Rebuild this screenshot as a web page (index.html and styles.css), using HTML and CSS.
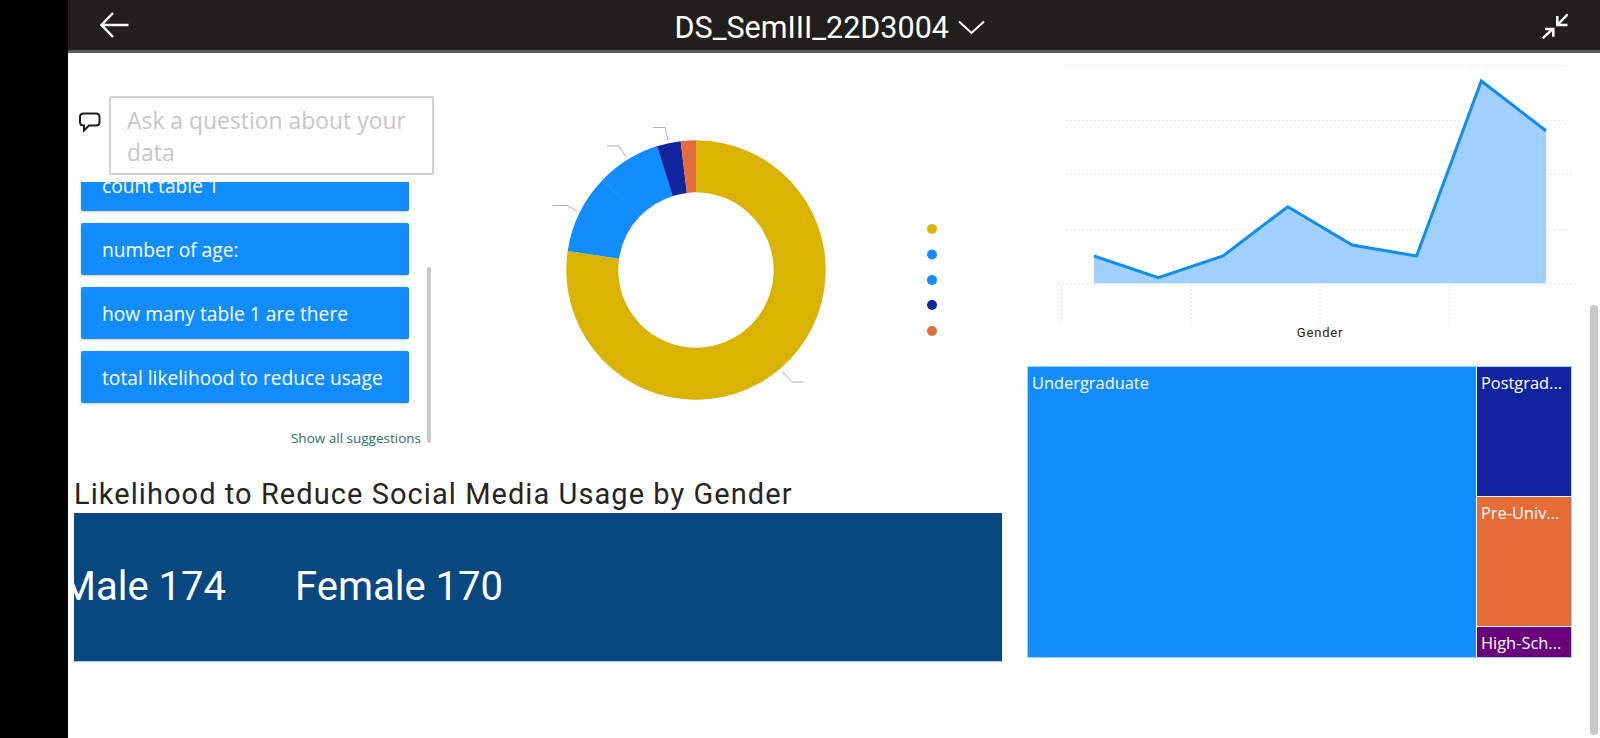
FILE: index.html
```html
<!DOCTYPE html>
<html>
<head>
    <meta charset="utf-8">
    <title>DS_SemIII_22D3004</title>
    <link rel="stylesheet" href="styles.css">
</head>
<body>
<div class="rail"></div>
<div class="app">
    <div class="topbar">
        <svg class="back" width="32" height="28" viewBox="0 0 32 28"><path d="M29.500 14H3M14 2 2.500 14 14 26" fill="none" stroke="#fff" stroke-width="2.500"/></svg>
        <div class="report-title">
            <span>DS_SemIII_22D3004</span>
            <svg width="27" height="15" viewBox="0 0 27 15"><path d="M1 1.500 13.500 13 26 1.500" fill="none" stroke="#fff" stroke-width="2"/></svg>
        </div>
        <svg class="collapse" width="28" height="28" viewBox="0 0 28 28">
            <path d="M27.700 3.300 17.300 14M17.300 5V14H27.500M2.700 27.300 13.300 17.300M5 18H13.300V25.700" fill="none" stroke="#fff" stroke-width="2.500"/>
        </svg>
    </div>

    <!-- report canvas, visuals sit where the report author dropped them -->
    <div class="canvas">
        <div class="qna">
            <svg class="chat" width="24" height="22" viewBox="0 0 24 22"><path d="M5.500 2.500H18Q21.500 2.500 21.500 6V11Q21.500 14.500 18 14.500H11L6 19.500V14.500H5.500Q2 14.500 2 11V6Q2 2.500 5.500 2.500Z" fill="#fff" stroke="#201f1e" stroke-width="2"/></svg>
            <div class="qna-input">Ask a question about your data</div>
            <div class="suggestions">
                <div class="suggestion first">count table 1</div>
                <div class="suggestion">number of age:</div>
                <div class="suggestion">how many table 1 are there</div>
                <div class="suggestion">total likelihood to reduce usage</div>
            </div>
            <div class="show-all">Show all suggestions</div>
            <div class="qna-scroll"></div>
        </div>

        <svg class="donut" width="420" height="300" viewBox="540 110 420 300">
            <path d="M696 140.300A129.700 129.700 0 1 1 567.700 251L619.100 258.700A77.700 77.700 0 1 0 696 192.300Z" fill="#d9b300"/>
            <path d="M567.700 251A129.700 129.700 0 0 1 602.700 180L640.100 216A77.700 77.700 0 0 0 619.100 258.700Z" fill="#118dff"/>
            <path d="M602.700 180A129.700 129.700 0 0 1 657 146.300L672.700 195.900A77.700 77.700 0 0 0 640.100 216Z" fill="#118dff" stroke="#118dff" stroke-width="0.400"/>
            <path d="M657 146.300A129.700 129.700 0 0 1 680.700 141.200L686.800 192.900A77.700 77.700 0 0 0 672.700 195.900Z" fill="#12239e"/>
            <path d="M680.700 141.200A129.700 129.700 0 0 1 696 140.300V192.300A77.700 77.700 0 0 0 686.800 192.900Z" fill="#e66c37"/>
            <g fill="none" stroke="#b3b0ad">
                <path d="M553 205.500H567L577.500 211.500"/>
                <path d="M607 146H618.500L626.500 157.500"/>
                <path d="M653 127.500H665L668 140.500"/>
                <path d="M783 372 792 382H803.500"/>
            </g>
            <circle cx="932" cy="229" r="5" fill="#d9b300"/>
            <circle cx="932" cy="254.500" r="5" fill="#118dff"/>
            <circle cx="932" cy="280" r="5" fill="#118dff"/>
            <circle cx="932" cy="305" r="5" fill="#12239e"/>
            <circle cx="932" cy="331" r="5" fill="#e66c37"/>
        </svg>

        <div class="card-title">Likelihood to Reduce Social Media Usage by Gender</div>
        <div class="banner">
            <div class="ticker">
                <span>Male 174</span>
                <span>Female 170</span>
            </div>
        </div>

        <svg class="area" width="540" height="300" viewBox="1050 55 540 300">
            <g fill="none" stroke="#dcdcdc" stroke-dasharray="1.500 2.500">
                <path d="M1066 65.700H1567M1066 120.700H1567M1066 174.300H1572M1066 229.300H1567M1058 283.700H1575"/>
                <path d="M1061.500 285V323M1191 285V323M1320 285V323M1449 285V323"/>
            </g>
            <path d="M1094 256 1158.400 277.700 1223 256 1287.800 206.700 1352.200 245 1416.600 256 1481.300 81 1546 130.700V283.300H1094Z" fill="#9fd0ff"/>
            <path d="M1094 256 1158.400 277.700 1223 256 1287.800 206.700 1352.200 245 1416.600 256 1481.300 81 1546 130.700" fill="none" stroke="#118dea" stroke-width="3"/>
            <text x="1320" y="337" text-anchor="middle" class="axis-label">Gender</text>
        </svg>

        <div class="treemap">
            <div class="tile tile-ug">Undergraduate</div>
            <div class="tile-col">
                <div class="tile tile-pg">Postgrad...</div>
                <div class="tile tile-pu">Pre-Univ...</div>
                <div class="tile tile-hs">High-Sch...</div>
            </div>
        </div>
    </div>
    <div class="page-scroll"></div>
</div>
</body>
</html>
```

FILE: styles.css
```css
html, body {
    margin: 0;
    height: 100%;
    overflow: hidden;
}
body {
    display: flex;
    font-family: "Open Sans", "Noto Sans", sans-serif;
    background: #000000;
}
.rail {
    width: 68px;
    flex: none;
    background: #000000;
}
.app {
    position: relative;
    flex: 1;
    display: flex;
    flex-direction: column;
    background: #ffffff;
}

/* top bar */
.topbar {
    position: relative;
    height: 50px;
    flex: none;
    display: flex;
    align-items: center;
    background: #201f1e;
    border-bottom: 3px solid #5c5b5a;
    box-sizing: content-box;
}
.back {
    margin-left: 31px;
}
.report-title {
    position: absolute;
    left: 606.500px;
    top: 0;
    height: 50px;
    padding-top: 4px;
    box-sizing: border-box;
    display: flex;
    align-items: center;
    gap: 9px;
    color: #ffffff;
    font-family: "Roboto", sans-serif;
    font-size: 30.500px;
}
.collapse {
    margin-left: auto;
    margin-right: 32px;
}

/* canvas */
.canvas {
    position: relative;
    flex: 1;
    margin-top: -1px;
}
.canvas > * {
    position: absolute;
}

/* q&a */
.qna {
    left: 0;
    top: 0;
    width: 440px;
    height: 400px;
}
.qna > * {
    position: absolute;
}
.chat {
    left: 10px;
    top: 59px;
}
.qna-input {
    left: 41px;
    top: 44px;
    width: 325px;
    height: 79px;
    box-sizing: border-box;
    padding: 7px 0 7px 16px;
    border: 2px solid #d0d0d0;
    border-radius: 2px;
    background: #ffffff;
    color: #c8c6c4;
    font-size: 22.900px;
    line-height: 32px;
    z-index: 2;
}
.suggestions {
    left: 10px;
    top: 130px;
    width: 328px;
    height: 224px;
    padding: 0 3px 3px;
    display: flex;
    flex-direction: column;
    gap: 12px;
    overflow: hidden;
}
.suggestion {
    flex: none;
    height: 52px;
    box-sizing: border-box;
    padding: 1px 0 0 21px;
    display: flex;
    align-items: center;
    border-radius: 2px;
    background: #118dff;
    box-shadow: 0 1px 3px rgba(0, 0, 0, 0.22);
    color: #ffffff;
    font-size: 19.200px;
}
.suggestion.first {
    margin-top: -23px;
}
.show-all {
    right: 87px;
    top: 377px;
    color: #2f6f65;
    font-size: 13.500px;
}
.qna-scroll {
    left: 359px;
    top: 215px;
    width: 4px;
    height: 176px;
    border-radius: 2px;
    background: #c8c8c8;
}

/* donut */
.donut {
    left: 472px;
    top: 58px;
}

/* banner */
.card-title {
    left: 6px;
    top: 425px;
    color: #252423;
    font-family: "Roboto", sans-serif;
    font-size: 29px;
    letter-spacing: 1.060px;
    white-space: nowrap;
}
.banner {
    left: 5.500px;
    top: 461px;
    width: 928.500px;
    height: 149px;
    display: flex;
    align-items: center;
    overflow: hidden;
    background: #094780;
    border-bottom: 1px solid #9fc5e8;
    box-sizing: border-box;
}
.ticker {
    display: flex;
    gap: 69px;
    margin: -2px 0 0 -12.500px;
    color: #ffffff;
    font-family: "Roboto", sans-serif;
    font-size: 40px;
    white-space: nowrap;
}

/* area chart */
.area {
    left: 982px;
    top: 3px;
}
.axis-label {
    font-family: "Roboto", sans-serif;
    font-size: 13px;
    letter-spacing: 0.800px;
    fill: #252423;
}

/* treemap */
.treemap {
    left: 959px;
    top: 314px;
    width: 545px;
    height: 292px;
    display: flex;
    gap: 1px;
    border: 1px solid #a5d3fb;
    box-sizing: border-box;
    background: #ffffff;
}
.tile {
    box-sizing: border-box;
    padding: 4px 4px;
    color: #ffffff;
    font-size: 16.400px;
    white-space: nowrap;
    overflow: hidden;
}
.tile-ug {
    flex: 1;
    background: #118dff;
}
.tile-col {
    width: 94px;
    flex: none;
    display: flex;
    flex-direction: column;
    gap: 1px;
}
.tile-pg {
    height: 129px;
    background: #12239e;
}
.tile-pu {
    height: 129px;
    background: #e66c37;
}
.tile-hs {
    flex: 1;
    background: #6b007b;
}

.page-scroll {
    position: absolute;
    right: 2px;
    top: 305px;
    bottom: 3px;
    width: 8px;
    border-radius: 4px;
    background: #c8c8c8;
}
```
